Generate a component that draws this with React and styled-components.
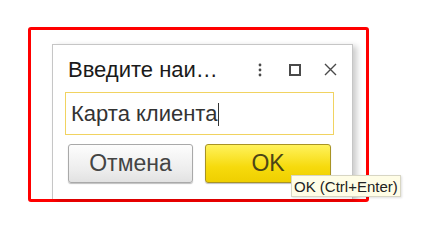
import React from 'react'
import styled, { createGlobalStyle } from 'styled-components'

const GlobalStyle = createGlobalStyle`
  body {
    margin: 0;
    background: #fff;
    font-family: "Liberation Sans", Arial, sans-serif;
  }
`

const Page = styled.div`
  padding: 27px 0 0 28px;
`

// red annotation frame drawn round the dialog
const Frame = styled.div`
  position: relative;
  box-sizing: border-box;
  width: 341px;
  height: 175px;
  border: 3px solid #ff0000;
  border-radius: 3px;
  padding: 14px 13px 0 21px;
  display: flex;
`

const Dialog = styled.div`
  flex: 1;
  display: flex;
  flex-direction: column;
  background: #fff;
  border: 1px solid #c6c6c6;
  border-bottom: none;
  padding: 0 18px 0 12px;
  box-shadow: 4px 2px 6px rgba(0, 0, 0, 0.2);
`

const TitleBar = styled.div`
  height: 47px;
  display: flex;
  align-items: center;
  padding: 2px 0 0 3px;
  box-sizing: border-box;
  margin-right: -3px;
`

const Title = styled.div`
  flex: 1;
  font-size: 22px;
  color: #1a1a1a;
  white-space: nowrap;
`

const Tools = styled.div`
  display: flex;
  align-items: center;
  gap: 21px;
`

const ToolButton = styled.div`
  width: 14px;
  height: 14px;
  display: flex;
  align-items: center;
  justify-content: center;
  color: #4a4a4a;
`

const Field = styled.div`
  box-sizing: border-box;
  height: 43px;
  border: 1px solid #f1d361;
  display: flex;
  align-items: center;
  padding: 1px 0 0 5px;
  font-size: 22px;
  color: #333;
`

const Caret = styled.span`
  display: inline-block;
  width: 0;
  height: 23px;
  border-left: 1px solid #333;
  margin-left: 1px;
`

const Buttons = styled.div`
  display: flex;
  gap: 12px;
  margin-top: 9px;
  padding-left: 3px;
`

const Button = styled.div`
  box-sizing: border-box;
  width: ${p => p.$w}px;
  height: 39px;
  border-radius: 3px;
  display: flex;
  align-items: center;
  justify-content: center;
  font-size: 23px;
  border: 1px solid ${p => (p.$primary ? '#a89324' : '#a9a9a9')};
  color: ${p => (p.$primary ? '#4c4516' : '#444')};
  background: ${p =>
    p.$primary
      ? 'linear-gradient(#fff25c, #f6da0c 60%, #efcf00)'
      : 'linear-gradient(#fdfdfd, #ececec 70%, #e2e2e2)'};
  box-shadow: 0 1px 1px rgba(0, 0, 0, 0.25);
`

const Tooltip = styled.div`
  position: absolute;
  left: 260px;
  top: 145px;
  box-sizing: border-box;
  width: 110px;
  height: 22px;
  display: flex;
  align-items: center;
  padding-left: 2px;
  background: #fffde6;
  border: 1px solid #d8d6c4;
  font-size: 15px;
  color: #222;
  white-space: nowrap;
  box-shadow: 1px 1px 2px rgba(0, 0, 0, 0.12);
`

const MoreIcon = () => (
  <svg width="4" height="14" viewBox="0 0 4 14">
    <circle cx="2" cy="2" r="1.4" fill="currentColor" />
    <circle cx="2" cy="7" r="1.4" fill="currentColor" />
    <circle cx="2" cy="12" r="1.4" fill="currentColor" />
  </svg>
)

const MaximizeIcon = () => (
  <svg width="12" height="12" viewBox="0 0 12 12">
    <rect x="1" y="1" width="10" height="10" fill="none" stroke="currentColor" strokeWidth="2" />
  </svg>
)

const CloseIcon = () => (
  <svg width="13" height="13" viewBox="0 0 13 13">
    <path d="M1 1 L12 12 M12 1 L1 12" stroke="currentColor" strokeWidth="1.4" fill="none" />
  </svg>
)

export default function App () {
  return (
    <Page>
      <GlobalStyle />
      <Frame>
        <Dialog>
          <TitleBar>
            <Title>Введите наи…</Title>
            <Tools>
              <ToolButton><MoreIcon /></ToolButton>
              <ToolButton><MaximizeIcon /></ToolButton>
              <ToolButton><CloseIcon /></ToolButton>
            </Tools>
          </TitleBar>
          <Field>
            Карта клиента<Caret />
          </Field>
          <Buttons>
            <Button $w={125}>Отмена</Button>
            <Button $w={126} $primary>OK</Button>
          </Buttons>
        </Dialog>
        <Tooltip>OK (Ctrl+Enter)</Tooltip>
      </Frame>
    </Page>
  )
}
